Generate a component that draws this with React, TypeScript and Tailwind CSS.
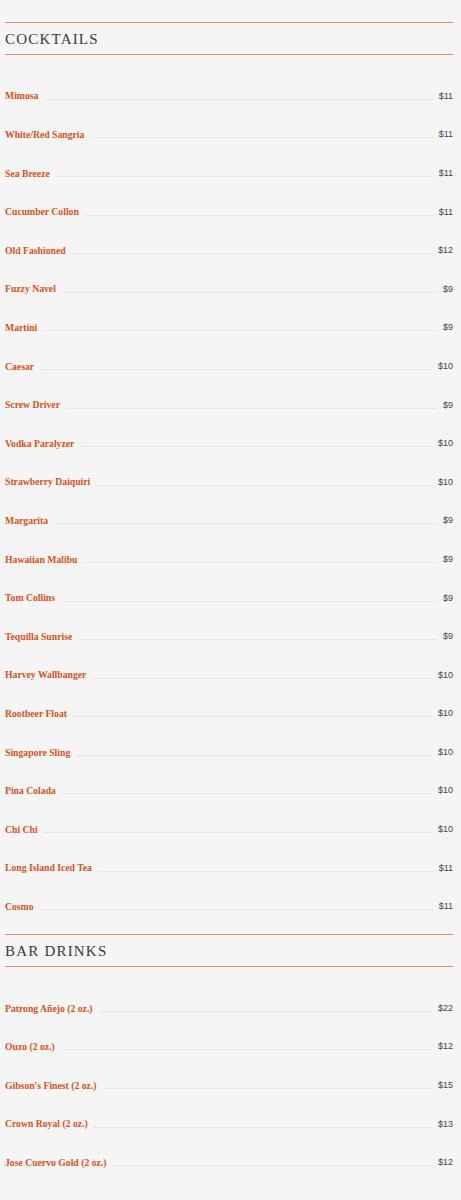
import React from "react";

const cocktails: [string, string][] = [
  ["Mimosa", "$11"],
  ["White/Red Sangria", "$11"],
  ["Sea Breeze", "$11"],
  ["Cucumber Collon", "$11"],
  ["Old Fashioned", "$12"],
  ["Fuzzy Navel", "$9"],
  ["Martini", "$9"],
  ["Caesar", "$10"],
  ["Screw Driver", "$9"],
  ["Vodka Paralyzer", "$10"],
  ["Strawberry Daiquiri", "$10"],
  ["Margarita", "$9"],
  ["Hawaiian Malibu", "$9"],
  ["Tom Collins", "$9"],
  ["Tequilla Sunrise", "$9"],
  ["Harvey Wallbanger", "$10"],
  ["Rootbeer Float", "$10"],
  ["Singapore Sling", "$10"],
  ["Pina Colada", "$10"],
  ["Chi Chi", "$10"],
  ["Long Island Iced Tea", "$11"],
  ["Cosmo", "$11"],
];

const bar: [string, string][] = [
  ["Patrong Añejo (2 oz.)", "$22"],
  ["Ouzo (2 oz.)", "$12"],
  ["Gibson's Finest (2 oz.)", "$15"],
  ["Crown Royal (2 oz.)", "$13"],
  ["Jose Cuervo Gold (2 oz.)", "$12"],
];

function Section({ title, items }: { title: string; items: [string, string][] }) {
  return (
    <section>
      <div className="border-t border-b border-[#e58f68] h-[33px] flex items-center">
        <h2 className="font-['Liberation_Serif',serif] text-[15px] tracking-[0.08em] text-[#3a3a3a] uppercase leading-none pt-[1px]">
          {title}
        </h2>
      </div>
      <ul className="pt-[22px] pb-[8px]">
        {items.map(([name, price]) => (
          <li key={name} className="h-[38.6px] flex items-center">
            <span className="font-['Liberation_Serif',serif] font-bold text-[9.7px] text-[#d4521c] leading-none">
              {name}
            </span>
            <span className="flex-1 mx-[6px] border-b border-dotted border-[#f0d2c4] translate-y-[3px]"></span>
            <span className="font-['Liberation_Sans',sans-serif] text-[9px] text-[#444] leading-none">
              {price}
            </span>
          </li>
        ))}
      </ul>
    </section>
  );
}

export default function App() {
  return (
    <div className="bg-[#f5f5f5] min-h-[1200px] pt-[22px] pl-[5px] pr-[8px]">
      <Section title="Cocktails" items={cocktails} />
      <Section title="Bar Drinks" items={bar} />
    </div>
  );
}
